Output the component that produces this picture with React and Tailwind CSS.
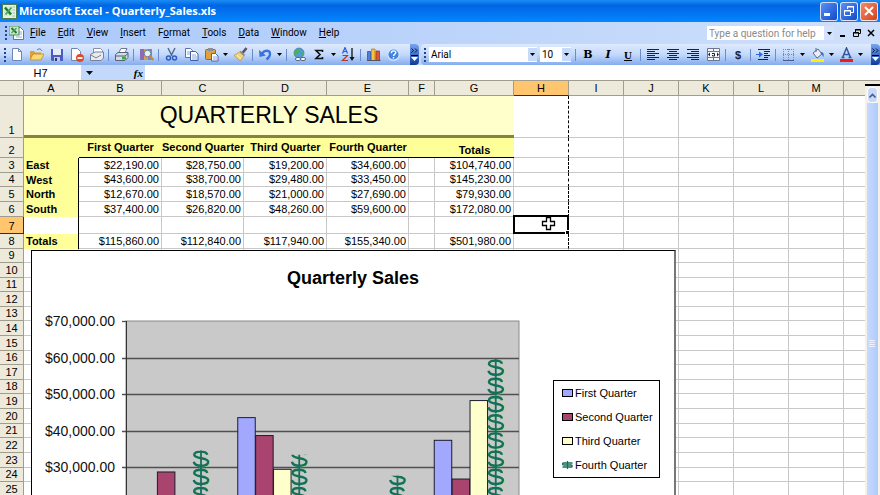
import React, { useState } from 'react';

const menus = ['File', 'Edit', 'View', 'Insert', 'Format', 'Tools', 'Data', 'Window', 'Help'];

const columns = ['A', 'B', 'C', 'D', 'E', 'F', 'G', 'H', 'I', 'J', 'K', 'L', 'M', ''];

const regions = [
  { row: 3, name: 'East', values: ['$22,190.00', '$28,750.00', '$19,200.00', '$34,600.00', '', '$104,740.00'], height: 'h-[15px]' },
  { row: 4, name: 'West', values: ['$43,600.00', '$38,700.00', '$29,480.00', '$33,450.00', '', '$145,230.00'], height: 'h-[14px]' },
  { row: 5, name: 'North', values: ['$12,670.00', '$18,570.00', '$21,000.00', '$27,690.00', '', '$79,930.00'], height: 'h-[15px]' },
  { row: 6, name: 'South', values: ['$37,400.00', '$26,820.00', '$48,260.00', '$59,600.00', '', '$172,080.00'], height: 'h-[15px]' },
  { row: 7, name: '', values: ['', '', '', '', '', ''], height: 'h-[17px]' },
  { row: 8, name: 'Totals', values: ['$115,860.00', '$112,840.00', '$117,940.00', '$155,340.00', '', '$501,980.00'], height: 'h-[15px]' },
];

const emptyRows = [9, 10, 11, 12, 13, 14, 15, 16, 17, 18, 19, 20, 21, 22, 23, 24, 25];
const shortRows = [9, 11, 13, 16, 18, 21, 24];

const chartData = [
  [22190, 28750, 19200, 34600],
  [43600, 38700, 29480, 33450],
  [12670, 18570, 21000, 27690],
  [37400, 26820, 48260, 59600],
];
const barFills = ['#a3a8ff', '#a8446e', '#ffffcc'];

const Caret = () => (
  <svg width="5" height="3" viewBox="0 0 5 3"><path d="M0 0h5L2.5 3z" fill="#000" /></svg>
);

const Separator = () => <div className="w-[5px] flex justify-center"><div className="w-px h-3 bg-[#6a8ccb]" /></div>;

const Grip = () => (
  <div className="w-1.5 flex justify-center">
    <svg width="2" height="14" viewBox="0 0 2 14" fill="#27418c">
      <path d="M0 0h2v2H0zM0 4h2v2H0zM0 8h2v2H0zM0 12h2v2H0z" />
    </svg>
  </div>
);

const ToolButton = ({ label, children }) => (
  <button type="button" aria-label={label} className="w-5 h-5 flex items-center justify-center shrink-0">
    <svg width="15" height="15" viewBox="0 0 15 15" fill="none">{children}</svg>
  </button>
);

const DropButton = ({ label }) => (
  <button type="button" aria-label={label} className="w-[9px] h-5 flex items-center justify-center shrink-0">
    <Caret />
  </button>
);

const Overflow = () => (
  <button
    type="button"
    aria-label="Toolbar options"
    className="w-[9px] h-[21px] ml-auto shrink-0 flex flex-col items-center justify-between py-1 rounded-r-sm bg-linear-to-b from-[#78a5ef] to-[#0b3a9b]"
  >
    <svg width="7" height="5" viewBox="0 0 7 5" fill="none" stroke="#00123f"><path d="M.5.5l2 2-2 2M4 .5l2 2-2 2" /></svg>
    <svg width="7" height="6" viewBox="0 0 7 6"><path d="M0 0h7v1H0z" fill="#000" /><path d="M0 2h7L3.500 6z" fill="#fff" /></svg>
  </button>
);

const ExcelIcon = () => (
  <svg width="15" height="15" viewBox="0 0 15 15">
    <rect x=".5" y=".5" width="14" height="14" fill="#e8f2e4" stroke="#4e7c54" />
    <path d="M10 3h3M10 6h3M10 9h3M10 12h3" stroke="#9bbf9b" />
    <rect x="2" y="2" width="9" height="10" fill="#d6ecd0" />
    <path d="M3 3.500l6 7" stroke="#1f7a35" strokeWidth="2.500" />
    <path d="M9.500 3.500l-6 7" stroke="#46a556" strokeWidth="1.800" />
  </svg>
);

const TitleBar = () => (
  <header className="h-[22px] shrink-0 flex items-center pl-0.5 pr-0.5 bg-linear-to-b from-[#1b8df5] via-[#0265e4] via-25% to-[#0586ff]">
    <ExcelIcon />
    <h1 className="ml-0.5 text-[11px] leading-4 font-bold text-white font-['Open_Sans',sans-serif] whitespace-nowrap">
      Microsoft Excel - Quarterly_Sales.xls
    </h1>
    <div className="ml-auto flex gap-0.5">
      <button type="button" aria-label="Minimize" className="w-[18px] h-[19px] rounded-[3px] border border-white/80 bg-linear-to-br from-[#5b90f5] to-[#1547c8] flex items-center justify-center">
        <svg width="12" height="12" viewBox="0 0 12 12"><path d="M1 8h6v3H1z" fill="#fff" /></svg>
      </button>
      <button type="button" aria-label="Restore" className="w-[18px] h-[19px] rounded-[3px] border border-white/80 bg-linear-to-br from-[#5b90f5] to-[#1547c8] flex items-center justify-center">
        <svg width="12" height="12" viewBox="0 0 12 12" fill="none" stroke="#fff">
          <path d="M4.500 4V1.500h6v6H8M4 2h7" />
          <path d="M1.500 5.500h6v5h-6zM1 6h7" />
        </svg>
      </button>
      <button type="button" aria-label="Close" className="w-[18px] h-[19px] rounded-[3px] border border-white/80 bg-linear-to-br from-[#f08a68] to-[#d3401a] flex items-center justify-center">
        <svg width="12" height="12" viewBox="0 0 12 12"><path d="M2 2l8 8M10 2l-8 8" stroke="#fff" strokeWidth="2" /></svg>
      </button>
    </div>
  </header>
);

const MenuBar = () => (
  <nav className="h-[22px] shrink-0 flex items-center pl-[3px] pr-0.5 bg-linear-to-r from-[#a9c8fa] to-[#cfe0fb] font-[Roboto,sans-serif] text-[10px] leading-3 text-black">
    <Grip />
    <svg width="15" height="14" viewBox="0 0 15 14">
      <path d="M4.500 1.500h7l3 3v9h-10z" fill="#fff" stroke="#5573ad" />
      <path d="M10 6h3M10 8h3M7 11h6" stroke="#8fa8d8" />
      <rect x="0" y="0" width="10" height="9" fill="#cfe8cc" stroke="#4d8b56" />
      <path d="M2.500 2l5 5" stroke="#1f7a35" strokeWidth="2" />
      <path d="M7.500 2l-5 5" stroke="#46a556" strokeWidth="1.500" />
    </svg>
    {menus.map((menu) => (
      <button key={menu} type="button" className="px-1.5 h-5">
        {menu === 'Format' ? <>F<u>o</u>rmat</> : <><u>{menu[0]}</u>{menu.slice(1)}</>}
      </button>
    ))}
    <div className="ml-auto flex items-center h-[14px] bg-white">
      <input
        type="text"
        aria-label="Help question"
        placeholder="Type a question for help"
        className="w-[117px] h-[14px] pl-0.5 text-[10px] placeholder-[#8a8a8a] outline-none"
      />
      <button type="button" aria-label="Recent questions" className="w-[10px] h-[14px] flex items-center justify-center bg-[#d3e3fb]">
        <Caret />
      </button>
    </div>
    <button type="button" aria-label="Minimize workbook" className="ml-0.5 w-[14px] h-4 flex items-center justify-center">
      <svg width="8" height="8" viewBox="0 0 8 8"><path d="M1 6h5v2H1z" fill="#000" /></svg>
    </button>
    <button type="button" aria-label="Restore workbook" className="w-[14px] h-4 flex items-center justify-center">
      <svg width="8" height="8" viewBox="0 0 8 8" fill="none" stroke="#000">
        <path d="M2.500 3V.5h5v4H6M2 1h6" />
        <path d="M.5 3.500h5v4h-5zM0 4h6" />
      </svg>
    </button>
    <button type="button" aria-label="Close workbook" className="w-[14px] h-4 flex items-center justify-center">
      <svg width="8" height="8" viewBox="0 0 8 8"><path d="M1 1l6 6M7 1L1 7" stroke="#000" strokeWidth="1.500" /></svg>
    </button>
  </nav>
);

const StandardToolbar = () => (
  <div className="flex items-center w-[419px] h-[21px] shrink-0 rounded-r-sm bg-linear-to-b from-[#deeafd] via-[#c3d9fb] to-[#86aced]">
    <div className="pl-0.5 w-1.5"><Grip /></div>
    <ToolButton label="New">
      <path d="M3.500 1.500h6l3 3v9h-9z" fill="#fff" stroke="#6f86b5" />
      <path d="M9.500 1.500v3h3" stroke="#6f86b5" />
    </ToolButton>
    <ToolButton label="Open">
      <path d="M1 4h4l1 1.500h6V13H1z" fill="#d9a13a" />
      <path d="M4 7h11l-3 6H1z" fill="#fbd770" stroke="#b98222" strokeWidth=".7" />
      <path d="M8 3c2-2 4-1 5 1" stroke="#4a6da8" />
    </ToolButton>
    <ToolButton label="Save">
      <path d="M2 2h12v12H3l-1-1z" fill="#4a5cc0" />
      <path d="M4 2h8v6H4z" fill="#e8ecfa" />
      <path d="M5 10h6v4H5z" fill="#c0c8e8" />
      <path d="M6 11h2v3H6z" fill="#2b3480" />
    </ToolButton>
    <ToolButton label="Permission">
      <path d="M2.500 1.500h6l3 3v9h-9z" fill="#fff" stroke="#6f86b5" />
      <circle cx="11" cy="11" r="4" fill="#dd4a2a" />
      <path d="M8.500 11h5" stroke="#fff" strokeWidth="1.800" />
    </ToolButton>
    <ToolButton label="E-mail">
      <path d="M4.500 6V1.500h7l2 2V8" fill="#fff" stroke="#8391ab" />
      <path d="M1.500 7.500L6 5h8.500v6L12 13.500H1.500z" fill="#e9eaf0" stroke="#77819a" />
      <path d="M2 8l5 3 5-3" stroke="#77819a" />
    </ToolButton>
    <Separator />
    <ToolButton label="Print">
      <path d="M4.500 6L7 1.500h6L11 6z" fill="#fff" stroke="#6c7b95" />
      <path d="M1.500 7.500L4 5.500h10v5l-3 3H1.500z" fill="#d4d9e4" stroke="#56637d" />
      <path d="M2 9h9l3-2.500" stroke="#56637d" />
      <path d="M8 11h4" stroke="#35b234" strokeWidth="3" />
    </ToolButton>
    <Separator />
    <ToolButton label="Research">
      <path d="M1 2h4v11H1z" fill="#8c6cb8" />
      <path d="M5 2h4v11H5z" fill="#d99c50" />
      <path d="M9 2h4v11H9z" fill="#7c86c4" />
      <circle cx="8.500" cy="6.500" r="3.300" fill="#e6f1fb" stroke="#6f7f9a" />
      <path d="M11 9l3.500 4" stroke="#c58b36" strokeWidth="2" />
    </ToolButton>
    <Separator />
    <ToolButton label="Cut">
      <path d="M4 1l4 8M11 1L7 9" stroke="#51688e" strokeWidth="1.400" />
      <circle cx="4.500" cy="11" r="2" stroke="#2d5cc0" strokeWidth="1.500" />
      <circle cx="10.500" cy="11" r="2" stroke="#2d5cc0" strokeWidth="1.500" />
    </ToolButton>
    <ToolButton label="Copy">
      <path d="M1.500 1.500h5l2 2v7h-7z" fill="#fff" stroke="#5873ab" />
      <path d="M6.500 4.500h5l2.500 2.500v6.500H6.500z" fill="#fff" stroke="#3e5da3" />
      <path d="M3 5h3M3 7h3M8 8h4M8 10h5M8 12h5" stroke="#6d8fd6" strokeWidth=".8" />
    </ToolButton>
    <ToolButton label="Paste">
      <rect x="1.500" y="2.500" width="10" height="10" rx="1" fill="#e0a13a" stroke="#9b661b" />
      <path d="M4 1h5v3H4z" fill="#8a8fa0" />
      <path d="M7.500 6.500h4l2.500 2.500v5H7.500z" fill="#fff" stroke="#4d67a3" />
      <path d="M9 10h4M9 12h4" stroke="#6d8fd6" strokeWidth=".8" />
    </ToolButton>
    <DropButton label="Paste options" />
    <ToolButton label="Format Painter">
      <path d="M13.500 1l-4 5" stroke="#57516e" strokeWidth="2.500" />
      <path d="M7 4.500l4.500 4" stroke="#8189a8" strokeWidth="2" />
      <path d="M6.500 5l4.500 4-4 5L1 8.500z" fill="#f3d27a" stroke="#b98f38" strokeWidth=".7" />
      <path d="M4 8l4 4" stroke="#fff0b8" />
    </ToolButton>
    <Separator />
    <ToolButton label="Undo">
      <path d="M4 6.500C7 2.500 12 3 12 7c0 2.500-1.500 4-3.500 5.500" stroke="#3a72dc" strokeWidth="2.300" />
      <path d="M1 3l.5 7L8 8.500z" fill="#3a72dc" />
    </ToolButton>
    <DropButton label="Undo history" />
    <Separator />
    <ToolButton label="Insert Hyperlink">
      <circle cx="7" cy="6" r="5" fill="#4d9bd8" stroke="#3f7c9c" strokeWidth=".7" />
      <path d="M4 2.500c3-1 4 1 3 3s-3 1-4 3C1 6 2 4 4 2.500zM9 5l3 1-1 3-2-1z" fill="#4fae5d" />
      <rect x="3.500" y="10.500" width="5" height="3" rx="1.500" fill="#fff" stroke="#5c6678" />
      <rect x="8.500" y="10.500" width="5" height="3" rx="1.500" fill="#fff" stroke="#5c6678" />
    </ToolButton>
    <ToolButton label="AutoSum">
      <path d="M10.500 5V3.500H4l4 4-4 4h6.500V10" stroke="#111" strokeWidth="1.600" />
    </ToolButton>
    <DropButton label="More functions" />
    <ToolButton label="Sort Ascending">
      <path d="M1.500 6.500l2.500-6 2.500 6M2.500 4.500h3" stroke="#2e5fc8" strokeWidth="1.200" />
      <path d="M1.500 8.500h5l-5 5h5.500" stroke="#b03a30" strokeWidth="1.200" />
      <path d="M11 1v10" stroke="#111" strokeWidth="1.300" />
      <path d="M8.500 10h5L11 14z" fill="#111" />
    </ToolButton>
    <Separator />
    <ToolButton label="Chart Wizard">
      <path d="M1.500 4.500h3v9h-3z" fill="#4f7fdc" stroke="#274a95" strokeWidth=".7" />
      <path d="M5.500 2h3.500v11.500H5.500z" fill="#f3c343" stroke="#a57418" strokeWidth=".7" />
      <path d="M10 4h3.500v9.500H10z" fill="#d9593a" stroke="#8c2e18" strokeWidth=".7" />
      <path d="M1 13.500h13.500" stroke="#555" />
    </ToolButton>
    <ToolButton label="Help">
      <circle cx="7.500" cy="7.500" r="5.700" fill="#3f83e3" stroke="#d9e8fc" strokeWidth="1.200" />
      <path d="M5.300 6.200c0-3 4.500-3 4.500-.5C9.800 7.200 7.500 7 7.500 9M7.500 10v1.400" stroke="#fff" strokeWidth="1.400" />
    </ToolButton>
    <Overflow />
  </div>
);

const FormattingToolbar = () => {
  const [font, setFont] = useState('Arial');
  const [size, setSize] = useState('10');

  return (
    <div className="flex items-center flex-1 h-[21px] rounded-l-sm bg-linear-to-b from-[#deeafd] via-[#c3d9fb] to-[#86aced]">
      <div className="w-2 pl-px"><Grip /></div>
      <label className="flex items-center w-[108px] h-[15px] bg-white shrink-0">
        <select
          aria-label="Font"
          value={font}
          onChange={(e) => setFont(e.target.value)}
          className="appearance-none w-[99px] h-[15px] pl-0.5 text-[10px] leading-3 font-[Roboto,sans-serif] outline-none"
        >
          <option>Arial</option>
        </select>
        <span className="w-[9px] h-[13px] flex items-center justify-center bg-[#c6dafa]"><Caret /></span>
      </label>
      <label className="flex items-center w-[31px] h-[15px] ml-[3px] mr-0.5 bg-white shrink-0">
        <select
          aria-label="Font size"
          value={size}
          onChange={(e) => setSize(e.target.value)}
          className="appearance-none w-[22px] h-[15px] pl-0.5 text-[10px] leading-3 font-[Roboto,sans-serif] outline-none"
        >
          <option>10</option>
        </select>
        <span className="w-[9px] h-[13px] flex items-center justify-center bg-[#c6dafa]"><Caret /></span>
      </label>
      <Separator />
      <button type="button" className="w-5 h-5 shrink-0 text-[11px] leading-5 font-bold font-['DejaVu_Serif',serif]">B</button>
      <button type="button" className="w-5 h-5 shrink-0 text-[11px] leading-5 font-bold italic font-['DejaVu_Serif',serif]">I</button>
      <button type="button" className="w-5 h-5 shrink-0 text-[11px] leading-5 font-bold underline font-['Liberation_Serif',serif]">U</button>
      <Separator />
      <ToolButton label="Align Left">
        <path d="M1 2.500h12M1 4.500h8M1 6.500h12M1 8.500h8M1 10.500h12M1 12.500h8" stroke="#1a2233" />
      </ToolButton>
      <ToolButton label="Center">
        <path d="M1 2.500h12M3 4.500h8M1 6.500h12M3 8.500h8M1 10.500h12M3 12.500h8" stroke="#1a2233" />
      </ToolButton>
      <ToolButton label="Align Right">
        <path d="M1 2.500h12M5 4.500h8M1 6.500h12M5 8.500h8M1 10.500h12M5 12.500h8" stroke="#1a2233" />
      </ToolButton>
      <ToolButton label="Merge and Center">
        <path d="M1.500 1.500h12v12h-12zM1 4.500h13M1 10.500h13M7.500 1v3M7.500 11v3" fill="#f5f8ff" stroke="#6d7890" />
        <path d="M2 7.500l2-2v4zM13 7.500l-2-2v4z" fill="#222" />
        <path d="M6 6.500h2.500v2.500H6.500V8" stroke="#222" />
      </ToolButton>
      <Separator />
      <button type="button" className="w-5 h-5 shrink-0 text-[11px] leading-5 font-bold font-['Liberation_Sans',sans-serif] text-[#1a2233]">$</button>
      <Separator />
      <ToolButton label="Increase Indent">
        <path d="M2 2.500h12M8 4.500h6M8 6.500h4M8 8.500h6M8 10.500h4M2 12.500h10" stroke="#1a2233" />
        <path d="M3 4.500L7 7.500l-4 3z" fill="#2b6be0" />
        <path d="M0 7.500h3" stroke="#2b6be0" />
      </ToolButton>
      <Separator />
      <ToolButton label="Borders">
        <path d="M2.500 2v11M7.500 2v11M12.500 2v11M2 2.500h11M2 7.500h11" stroke="#7488b0" strokeDasharray="1 1" />
        <path d="M2 13.500h11" stroke="#4a5c85" />
      </ToolButton>
      <DropButton label="Border styles" />
      <ToolButton label="Fill Color">
        <path d="M3 6l5-4 4 5-5 4z" fill="#e9eef8" stroke="#5b6a8a" />
        <path d="M6 1v4" stroke="#5b6a8a" />
        <path d="M11 5c3 0 3 3 2.500 5-1.500-1-1-3-3-3z" fill="#3c6fd0" />
        <path d="M1 12h13v3H1z" fill="#fff200" />
      </ToolButton>
      <DropButton label="Fill colors" />
      <ToolButton label="Font Color">
        <path d="M3.500 10.500L7.500 1l4 9.500M5 7.500h5M2.500 10.500h3M9.500 10.500h3" stroke="#36569c" strokeWidth="1.500" />
        <path d="M1 12h13v3H1z" fill="#ee1c12" />
      </ToolButton>
      <DropButton label="Font colors" />
      <Overflow />
    </div>
  );
};

const FormulaBar = () => (
  <div className="h-[15px] shrink-0 flex bg-white">
    <input
      type="text"
      aria-label="Name box"
      defaultValue="H7"
      className="w-[81px] h-[15px] text-center text-[11px] leading-3 font-['Liberation_Sans',sans-serif] outline-none"
    />
    <div className="w-16 flex items-center justify-between pl-[5px] pr-0.5 bg-[#c3d9fb]">
      <svg width="7" height="4" viewBox="0 0 7 4"><path d="M0 0h7L3.500 4z" fill="#111" /></svg>
      <button type="button" className="text-[11px] leading-3 italic font-bold font-['Liberation_Serif',serif]">fx</button>
    </div>
    <input type="text" aria-label="Formula" className="flex-1 h-[15px] px-1 text-[11px] outline-none" />
  </div>
);

const RowHeader = ({ row, active }) => (
  <th
    scope="row"
    className={`border-r border-b align-bottom text-center font-normal p-0 ${active ? 'bg-[#ffc56f] border-[#4a1d3d]' : 'bg-[#edeadb] border-[#a09d8d]'}`}
  >
    {row}
  </th>
);

// columns H to N, H carries the page break
const BlankCells = ({ active }) => (
  <>
    <td className="relative p-0 border-b border-r border-[#c8c8c8] border-r-black [border-right-style:dashed]">
      {active && (
        <div className="absolute -left-px -top-0.5 -right-px -bottom-px border-2 border-black">
          <div className="absolute -right-[3px] -bottom-[3px] size-[5px] bg-black border border-white" />
          <svg width="15" height="15" viewBox="0 0 15 15" className="absolute left-[26px] -top-px">
            <path d="M5.500 1.500h4v4h4v4h-4v4h-4v-4h-4v-4h4z" fill="#fff" stroke="#000" strokeWidth="1.300" />
          </svg>
        </div>
      )}
    </td>
    {['I', 'J', 'K', 'L', 'M', 'N'].map((col) => (
      <td key={col} className="p-0 border-b border-r border-[#c8c8c8] last:border-r-0" />
    ))}
  </>
);

const Sheet = () => (
  <table className="w-full table-fixed border-separate border-spacing-0 text-[11px] leading-[13px] text-black">
    <colgroup>
      <col className="w-6" />
      <col className="w-[55px]" />
      <col className="w-[83px]" />
      <col className="w-[82px]" />
      <col className="w-[83px]" />
      <col className="w-[82px]" />
      <col className="w-[26px]" />
      <col className="w-[79px]" />
      <col className="w-[55px]" />
      <col className="w-[55px]" />
      <col className="w-[55px]" />
      <col className="w-[55px]" />
      <col className="w-[55px]" />
      <col className="w-[55px]" />
      <col />
    </colgroup>
    <thead>
      <tr className="h-4">
        <th className="p-0 bg-[#edeadb] border-t border-r border-b border-[#a09d8d]" />
        {columns.map((col) => (
          <th
            key={col}
            scope="col"
            className={`p-0 font-normal border-t border-r border-b ${col === 'H' ? 'bg-[#ffc56f] border-[#a09d8d] border-b-[#4a1d3d]' : 'bg-[#edeadb] border-[#a09d8d] last:border-r-0'}`}
          >
            {col}
          </th>
        ))}
      </tr>
    </thead>
    <tbody>
      <tr className="h-[42px]">
        <RowHeader row={1} />
        <td colSpan={7} className="p-0 text-center text-[23px] leading-[39px] bg-[#ffffcc] border-b-[3px] border-[#84843f]">
          QUARTERLY SALES
        </td>
        <BlankCells />
      </tr>
      <tr className="h-5 font-bold">
        <RowHeader row={2} />
        <td className="p-0 bg-[#ffff99]" />
        {['First Quarter', 'Second Quarter', 'Third Quarter', 'Fourth Quarter'].map((quarter) => (
          <td key={quarter} className="p-0 text-center whitespace-nowrap overflow-hidden bg-[#ffff99] border-b border-black">
            {quarter}
          </td>
        ))}
        <td className="p-0 bg-[#ffff99] border-b border-black" />
        <td className="p-0 text-center align-bottom bg-[#ffff99] border-b border-black">Totals</td>
        <BlankCells />
      </tr>
      {regions.map((region) => (
        <tr key={region.row} className={region.height}>
          <RowHeader row={region.row} active={region.row === 7} />
          <td className={`p-0 pl-0.5 font-bold border-r border-black ${region.name ? 'bg-[#ffff99]' : 'bg-white'}`}>
            {region.name}
          </td>
          {region.values.map((value, i) => (
            <td key={i} className="p-0 pr-0.5 text-right whitespace-nowrap border-b border-r border-[#c8c8c8]">
              {value}
            </td>
          ))}
          <BlankCells active={region.row === 7} />
        </tr>
      ))}
      {emptyRows.map((row) => (
        <tr key={row} className={shortRows.includes(row) ? 'h-[14px]' : 'h-[15px]'}>
          <RowHeader row={row} />
          {columns.map((col) => (
            <td key={col} className="p-0 border-b border-r border-[#c8c8c8] last:border-r-0" />
          ))}
        </tr>
      ))}
    </tbody>
  </table>
);

const Plot = () => {
  const top = 11;
  const step = 36.6;
  const bottom = top + step * 7;
  const left = 94;

  return (
    <svg width="490" height="300" viewBox="0 0 490 300" className="shrink-0">
      <defs>
        <symbol id="dollar" viewBox="0 0 18 18.200">
          <path d="M2.500 12.500c1 2.700 3.500 4 7 4 4 0 7.500-1 7.500-4 0-4.500-14-2.500-14-7C3 3 6 2.300 9.300 2.300c3.500 0 6 .8 6.400 3.400" fill="none" stroke="#a5dc8c" strokeWidth="2" />
          <path d="M1.500 12c.5 2.700 3.500 4 7.300 4 4 0 7.200-1 7.200-4 0-4.500-14-2.500-14-7C2 2.500 5 1.800 8.500 1.800c3.700 0 6 .8 6.500 3.200" fill="none" stroke="#14705a" strokeWidth="2.400" />
          <path d="M8.800 0v18.200" stroke="#14705a" strokeWidth="1.800" />
        </symbol>
      </defs>
      <rect x={left} y={top} width="393" height={bottom - top} fill="#c9c9c9" stroke="#8a8a8a" />
      {[0, 1, 2, 3, 4].map((i) => (
        <g key={i}>
          <path
            d={`M${left - 4} ${Math.round(top + step * i)}.5H${i ? 487 : left}`}
            stroke="#505050"
            strokeWidth="1.300"
          />
          <text x={left - 11} y={Math.round(top + step * i) + 5} textAnchor="end" fontSize="14" fill="#111">
            {`$${70 - i * 10},000.00`}
          </text>
        </g>
      ))}
      <path d={`M${left}.5 ${top}V300`} stroke="#333" />
      {chartData.map((values, region) =>
        values.map((value, quarter) => {
          const height = (value / 10000) * step;
          const x = left + 13.5 + region * 98.25 + quarter * 17.9;
          if (quarter < 3) {
            return <rect key={quarter} x={x} y={bottom - height} width="17.500" height={height} fill={barFills[quarter]} stroke="#1c1c30" />;
          }
          // stack of pictures, the uppermost one is cut at the value
          const count = Math.ceil(height / 18.2);
          return (
            <svg key={quarter} x={x - 1} y={bottom - height} width="18" height={height} overflow="hidden">
              {Array.from({ length: count }, (_, n) => (
                <use key={n} href="#dollar" x="0" y={height - 18.2 * (n + 1)} width="18" height="18.200" />
              ))}
            </svg>
          );
        })
      )}
    </svg>
  );
};

const Legend = () => (
  <ul className="w-[107px] h-[98px] mt-[70px] ml-[31px] pl-2 border border-black bg-white flex flex-col justify-around text-[11px] leading-4">
    <li className="flex items-center gap-0.5"><span className="w-[11px] h-2 border border-black bg-[#a3a8ff]" />First Quarter</li>
    <li className="flex items-center gap-0.5"><span className="w-[11px] h-2 border border-black bg-[#a8446e]" />Second Quarter</li>
    <li className="flex items-center gap-0.5"><span className="w-[11px] h-2 border border-black bg-[#ffffcc]" />Third Quarter</li>
    <li className="flex items-center gap-0.5">
      <svg width="11" height="8" viewBox="0 0 11 8" fill="none" stroke="#14705a" strokeWidth="1.300">
        <path d="M.5 6h8.500c2 0 1-2 0-2H2C0 4 0 2 2 2h8.500M5.500 0v8" />
      </svg>
      Fourth Quarter
    </li>
  </ul>
);

const SalesChart = () => (
  <section className="absolute left-[31px] top-[170px] w-[645px] h-[360px] bg-white border border-black border-r-2 border-r-[#777]">
    <h2 className="pt-[17px] pb-[22px] text-center text-[18px] leading-5 font-bold">Quarterly Sales</h2>
    <div className="flex items-start">
      <Plot />
      <Legend />
    </div>
  </section>
);

const ScrollBar = () => (
  <div className="w-[15px] shrink-0 flex flex-col items-center bg-[#f3f1e8] border-t border-[#a09d8d]">
    <div className="w-full h-[5px] border-b-2 border-black bg-[#edeadb]" />
    <button type="button" aria-label="Scroll up" className="w-[11px] h-4 mt-px rounded-sm bg-[#c6d8fc] border border-white flex items-center justify-center">
      <svg width="7" height="5" viewBox="0 0 7 5" fill="none" stroke="#4d6185" strokeWidth="1.600"><path d="M.5 4.500l3-3 3 3" /></svg>
    </button>
    <div className="w-[11px] flex-1 bg-linear-to-r from-[#c8dafe] to-[#aecbfb] flex items-center justify-center pt-[90px]">
      <svg width="7" height="8" viewBox="0 0 7 8"><path d="M0 .5h6M0 2.500h6M0 4.500h6M0 6.500h6" stroke="#eef4ff" /></svg>
    </div>
  </div>
);

const App = () => {
  return (
    <div className="h-screen flex flex-col overflow-hidden bg-white font-['Liberation_Sans',Arial,sans-serif]">
      <TitleBar />
      <MenuBar />
      <div className="flex gap-0.5 shrink-0 bg-[#c3d9fb]">
        <StandardToolbar />
        <FormattingToolbar />
      </div>
      <FormulaBar />
      <main className="flex-1 min-h-0 flex">
        <div className="relative flex-1 min-w-0 overflow-hidden">
          <Sheet />
          <SalesChart />
        </div>
        <ScrollBar />
      </main>
    </div>
  );
};

export default App;
